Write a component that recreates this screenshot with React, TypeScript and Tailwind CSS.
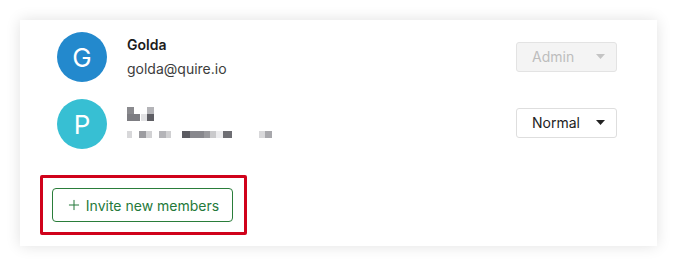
import React from 'react';
import { Plus } from 'lucide-react';

interface Member {
  initial: string;
  color: string;
  name?: string;
  email?: string;
  role: string;
  disabled?: boolean;
}

const members: Member[] = [
  { initial: 'G', color: 'bg-[#2389cd]', name: 'Golda', email: 'golda@quire.io', role: 'Admin', disabled: true },
  { initial: 'P', color: 'bg-[#37bfd3]', role: 'Normal' },
];

// pixelated (redacted) name + email
const Redacted: React.FC = () => (
  <div className="flex flex-col gap-[6px]">
    <div className="flex h-[14px] items-end">
      <div className="flex flex-col">
        <div className="h-[7px] w-[7px] bg-[#8a8a8e]" />
        <div className="h-[7px] w-[13px] bg-[#7d7d82]" />
      </div>
      <div className="ml-[1px] h-[7px] w-[6px] bg-[#e2e2e4]" />
      <div className="flex flex-col">
        <div className="h-[7px] w-[7px] bg-[#b4b4b8]" />
        <div className="h-[7px] w-[7px] bg-[#5e5e64]" />
      </div>
    </div>
    <div className="flex h-[14px] items-center">
      <div className="h-[7px] w-[5px] bg-[#d8d8da]" />
      <div className="ml-[7px] h-[7px] w-[7px] bg-[#9c9ca0]" />
      <div className="h-[7px] w-[6px] bg-[#d2d2d4]" />
      <div className="ml-[7px] h-[7px] w-[7px] bg-[#b4b4b8]" />
      <div className="h-[7px] w-[5px] bg-[#d0d0d2]" />
      <div className="ml-[11px] h-[7px] w-[8px] bg-[#5c5c62]" />
      <div className="h-[7px] w-[14px] bg-[#88888d]" />
      <div className="h-[7px] w-[6px] bg-[#9a9a9e]" />
      <div className="h-[7px] w-[6px] bg-[#cacacc]" />
      <div className="h-[7px] w-[7px] bg-[#ececee]" />
      <div className="h-[7px] w-[9px] bg-[#6e6e73]" />
      <div className="ml-[27px] h-[7px] w-[6px] bg-[#d8d8da]" />
      <div className="h-[7px] w-[7px] bg-[#a8a8ac]" />
    </div>
  </div>
);

const RoleSelect: React.FC<{ role: string; disabled?: boolean }> = ({ role, disabled }) => (
  <div
    className={
      disabled
        ? 'flex h-[30px] w-[101px] items-center justify-between rounded-[3px] border border-[#e3e3e3] bg-[#f4f4f4] pl-[15px] pr-[11px] text-[14px] text-[#bdbdbd]'
        : 'flex h-[30px] w-[101px] items-center justify-between rounded-[3px] border border-[#dedede] bg-white pl-[15px] pr-[11px] text-[14px] text-[#222]'
    }
  >
    <span>{role}</span>
    <svg width="9" height="5" viewBox="0 0 9 5">
      <path d="M0 0h9L4.5 5z" fill={disabled ? '#c4c4c4' : '#222'} />
    </svg>
  </div>
);

export default function App() {
  return (
    <div className="min-h-[266px] bg-white p-[20px] font-[family-name:Inter,sans-serif]">
      <div className="w-[637px] bg-white pb-[11px] pl-[20px] pr-[40px] pt-[12px] shadow-[0_0_14px_rgba(0,0,0,0.12)]">
        <div className="flex flex-col gap-[17px] pl-[17px]">
          {members.map((m) => (
            <div key={m.initial} className="flex items-center">
              <div
                className={`flex h-[50px] w-[50px] items-center justify-center rounded-full ${m.color} text-[26px] text-white`}
              >
                {m.initial}
              </div>
              <div className="ml-[20px] flex-1">
                {m.name ? (
                  <div className="flex flex-col gap-[6px]">
                    <div className="text-[14px] font-semibold leading-[18px] text-[#1c1c1c]">{m.name}</div>
                    <div className="text-[14px] leading-[18px] text-[#3c3c3c]">{m.email}</div>
                  </div>
                ) : (
                  <Redacted />
                )}
              </div>
              <div className={m.disabled ? 'mb-[1px]' : 'mb-[3px]'}>
                <RoleSelect role={m.role} disabled={m.disabled} />
              </div>
            </div>
          ))}
        </div>
        <div className="mt-[26px] w-[207px] rounded-[2px] border-[3px] border-[#d0021b] pb-[10px] pl-[9px] pt-[10px]">
          <button className="flex h-[34px] w-[181px] items-center justify-center gap-[4px] rounded-[4px] border border-[#2a7d3a] bg-white text-[14px] text-[#24793a]">
            <Plus size={16} strokeWidth={1.5} />
            <span>Invite new members</span>
          </button>
        </div>
      </div>
    </div>
  );
}
